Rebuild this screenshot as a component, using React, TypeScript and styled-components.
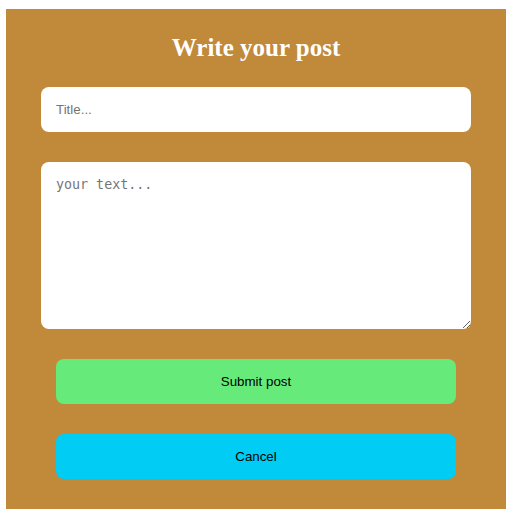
import React from "react";
import styled, { createGlobalStyle } from "styled-components";

const Global = createGlobalStyle`
  body {
    margin: 0;
    background: #ffffff;
    font-family: "Liberation Sans", Arial, sans-serif;
  }
`;

const Page = styled.div`
  padding: 9px 0 0 6px;
`;

const Panel = styled.form`
  box-sizing: border-box;
  width: 500px;
  height: 500px;
  background: #c1893a;
  padding: 0 35px 30px;
  display: flex;
  flex-direction: column;
  align-items: center;
`;

const Title = styled.h2`
  margin: 25px 0 26px;
  font-family: "Liberation Serif", "Times New Roman", serif;
  font-size: 25px;
  font-weight: bold;
  line-height: 27px;
  color: #ffffff;
  text-align: center;
`;

const TitleInput = styled.input`
  box-sizing: border-box;
  width: 430px;
  height: 45px;
  border: none;
  border-radius: 8px;
  padding: 0 15px;
  font-family: "Liberation Sans", Arial, sans-serif;
  font-size: 13.33px;
  outline: none;
  &::placeholder {
    color: #757575;
  }
`;

const Body = styled.textarea`
  box-sizing: border-box;
  width: 430px;
  height: 167px;
  margin-top: 30px;
  border: none;
  border-radius: 8px;
  padding: 15px;
  font-family: "DejaVu Sans Mono", "Liberation Mono", monospace;
  font-size: 13.33px;
  outline: none;
  &::placeholder {
    color: #757575;
  }
`;

const Button = styled.button<{ $bg: string }>`
  box-sizing: border-box;
  width: 400px;
  height: 45px;
  margin-top: 30px;
  border: none;
  border-radius: 8px;
  background: ${(p) => p.$bg};
  color: #000000;
  font-family: "Liberation Sans", Arial, sans-serif;
  font-size: 13.33px;
  cursor: pointer;
`;

export default function App() {
  return (
    <>
      <Global />
      <Page>
        <Panel onSubmit={(e) => e.preventDefault()}>
          <Title>Write your post</Title>
          <TitleInput placeholder="Title..." />
          <Body placeholder="your text..." />
          <Button type="submit" $bg="#66eb7b">Submit post</Button>
          <Button type="button" $bg="#00ccf4">Cancel</Button>
        </Panel>
      </Page>
    </>
  );
}
